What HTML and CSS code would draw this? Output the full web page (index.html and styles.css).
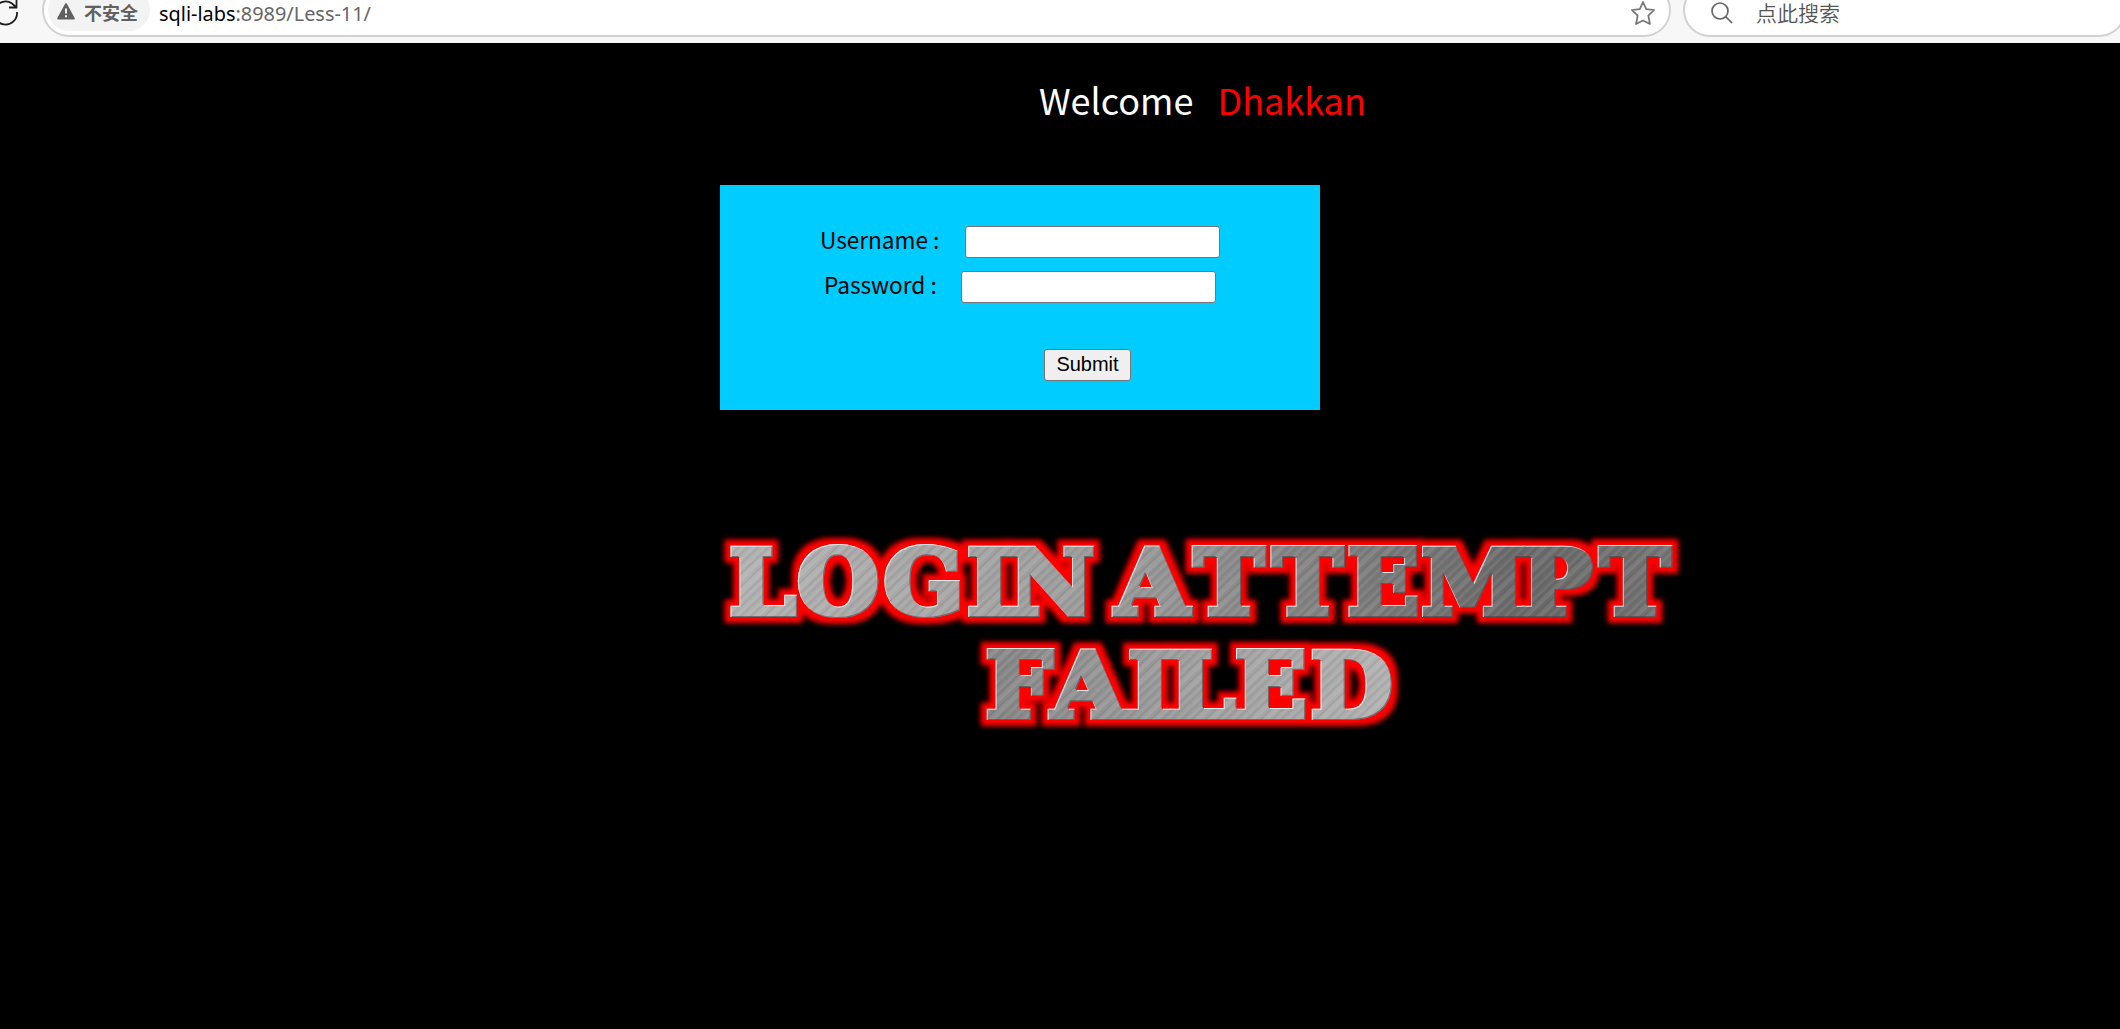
FILE: index.html
```html
<!DOCTYPE html>
<html lang="zh-CN">
<head>
<meta charset="utf-8">
<title>Less-11</title>
<link rel="stylesheet" href="styles.css">
</head>
<body>
<header class="toolbar">
  <svg class="reload" viewBox="0 0 20 26" fill="none" stroke="#1c1c1c" stroke-width="1.8"><path d="M17 12A11.5 11.5 0 1 1 12 3.500L16.500 7.500M16.500 0V7.500H9"/></svg>
  <div class="address">
    <div class="badge">
      <svg class="warn" viewBox="0 0 18 17"><path d="M9 1.200L16.800 15.500H1.200Z" fill="#616161" stroke="#616161" stroke-width="2" stroke-linejoin="round"/><path d="M9 5.500V10.500M9 12.200V14.200" stroke="#f3f3f3" stroke-width="2"/></svg>
      <span>不安全</span>
    </div>
    <span class="url"><b class="host">sqli-labs</b>:8989/Less-11/</span>
    <svg class="star" viewBox="0 0 26 26" fill="none" stroke="#757575" stroke-width="1.7" stroke-linejoin="round"><path d="M13 2L16.200 9.200L24.200 10L18.300 15.600L20 24L13 20.500L6 24L7.700 15.600L1.800 10L9.800 9.200Z"/></svg>
  </div>
  <div class="search">
    <svg class="lens" viewBox="0 0 22 22" fill="none" stroke="#666" stroke-width="1.7"><circle cx="9" cy="9" r="8"/><path d="M14.700 14.700L21 21"/></svg>
    <span>点此搜索</span>
  </div>
</header>
<main class="page">
  <h1 class="welcome"><span>Welcome</span><span class="name">Dhakkan</span></h1>
  <form class="login">
    <label class="row row-user"><span class="label">Username :</span><input class="field" type="text"></label>
    <label class="row row-pass"><span class="label">Password :</span><input class="field" type="password"></label>
    <button class="submit" type="button">Submit</button>
  </form>
  <svg class="banner" viewBox="720 530 970 210">
    <defs>
      <linearGradient id="shade1" x1="0" x2="1"><stop offset="0" stop-color="#b3b3b3"/><stop offset=".4" stop-color="#999"/><stop offset=".55" stop-color="#858585"/><stop offset=".8" stop-color="#686868"/><stop offset="1" stop-color="#777"/></linearGradient>
      <linearGradient id="shade2" gradientUnits="userSpaceOnUse" x1="260" x2="680"><stop offset="0" stop-color="#858585"/><stop offset=".5" stop-color="#a0a0a0"/><stop offset="1" stop-color="#b5b5b5"/></linearGradient>
      <pattern id="brush" width="37" height="37" patternUnits="userSpaceOnUse" patternTransform="rotate(45)">
        <path d="M2 0V37M9 0V37M17 0V37M26 0V37M32 0V37" stroke="#fff" stroke-opacity=".13"/>
        <path d="M5 0V37M12 0V37M21 0V37M29 0V37M35 0V37" stroke="#222" stroke-opacity=".1" stroke-width="1.200"/>
        <path d="M15 0V37M24 0V37" stroke="#fff" stroke-opacity=".08" stroke-width="3"/>
      </pattern>
      <pattern id="metal" x="680" y="530" width="970" height="210" patternUnits="userSpaceOnUse">
        <rect width="970" height="103" fill="url(#shade1)"/>
        <rect y="103" width="970" height="107" fill="url(#shade2)"/>
        <rect width="970" height="210" fill="url(#brush)"/>
      </pattern>
      <filter id="glow" filterUnits="userSpaceOnUse" x="710" y="520" width="990" height="230" color-interpolation-filters="sRGB">
        <feMorphology in="SourceAlpha" operator="dilate" radius="6"/>
        <feGaussianBlur stdDeviation="2.800" result="halo"/>
        <feFlood flood-color="#f00"/><feComposite in2="halo" operator="in" result="red"/>
        <feOffset in="SourceAlpha" dx="1.200" dy="1.200" result="lower"/>
        <feFlood flood-color="#fff" flood-opacity=".8"/><feComposite in2="SourceAlpha" operator="in"/><feComposite in2="lower" operator="out" result="light"/>
        <feOffset in="SourceAlpha" dx="-1" dy="-1" result="upper"/>
        <feFlood flood-color="#444" flood-opacity=".6"/><feComposite in2="SourceAlpha" operator="in"/><feComposite in2="upper" operator="out" result="dark"/>
        <feMerge><feMergeNode in="red"/><feMergeNode in="SourceGraphic"/><feMergeNode in="dark"/><feMergeNode in="light"/></feMerge>
      </filter>
    </defs>
    <g filter="url(#glow)">
      <g class="metal-text" transform="scale(1.05 1)">
        <text y="614" x="694.500 759 841.500 921 960 1037 1062.500 1137 1212 1283 1353.500 1448.500 1523.500">LOGIN ATTEMPT</text>
        <text y="717.500" x="938.500 1001.500 1074 1113 1176 1248">FAILED</text>
      </g>
    </g>
  </svg>
</main>
</body>
</html>
```
FILE: styles.css
```css
* { box-sizing: border-box; }
body { margin: 0; height: 1029px; overflow: hidden; background: #000; font-family: "Noto Sans CJK SC", sans-serif; }
.toolbar { display: flex; align-items: flex-start; height: 43px; background: #f7f7f7; overflow: hidden; }
.reload { width: 20px; height: 26px; margin-right: 22px; flex: none; }
.address, .search { display: flex; align-items: center; flex: none; height: 54px; margin-top: -17px; border: 2px solid #d2d2d2; border-radius: 27px; background: #fff; }
.address { width: 1629px; padding-left: 4px; }
.badge { display: flex; align-items: center; gap: 9px; width: 102px; height: 42px; padding: 4px 0 0 9px; border-radius: 21px; background: #f3f3f3; color: #616161; font-size: 18px; font-weight: 700; line-height: 20px; }
.badge span { white-space: nowrap; }
.warn { width: 18px; height: 17px; margin-bottom: 1px; }
.url { margin: 7px 0 0 9px; color: #666; font: 19.9px/22px "Noto Sans", sans-serif; white-space: nowrap; }
.host { color: #000; font-weight: 400; }
.star { width: 26px; height: 26px; margin: 5px 13px 0 auto; }
.search { width: 443px; margin-left: 12px; padding: 6px 0 0 26px; color: #555; font-size: 21px; line-height: 21px; }
.search span { font-weight: 350; margin-top: -1px; }
.lens { width: 22px; height: 22px; margin-right: 23px; }
.page { height: 986px; padding-top: 28px; }
.welcome { display: flex; gap: 24px; margin: 0 0 0 1039px; height: 56px; color: #fff; font-size: 36px; font-weight: 400; line-height: 56px; }
.name { color: #f00; }
.login { display: flex; flex-direction: column; width: 600px; height: 225px; margin: 58px 0 0 720px; padding-top: 41px; background: #0cf; }
.row { display: flex; align-items: center; height: 32px; margin-bottom: 13px; font-size: 22.6px; line-height: 32px; }
.row-user { padding-left: 100px; }
.row-pass { padding-left: 104px; }
.label { white-space: nowrap; width: 145px; padding-bottom: 4px; }
.row-pass .label { width: 137px; }
.field { width: 255px; height: 32px; border: 1px solid #767676; border-radius: 3px; background: #fff; }
.submit { width: 87px; height: 32px; margin: 33px 0 0 324px; padding: 0 0 2px; border: 1px solid #767676; border-radius: 3px; background: #efefef; color: #000; font: 20px "Liberation Sans", sans-serif; }
.banner { display: block; width: 970px; height: 210px; margin: 120px 0 0 720px; }
.metal-text { fill: url(#metal); stroke: url(#metal); stroke-width: 6px; font: bold 90px "DejaVu Serif", serif; white-space: pre; }
```
